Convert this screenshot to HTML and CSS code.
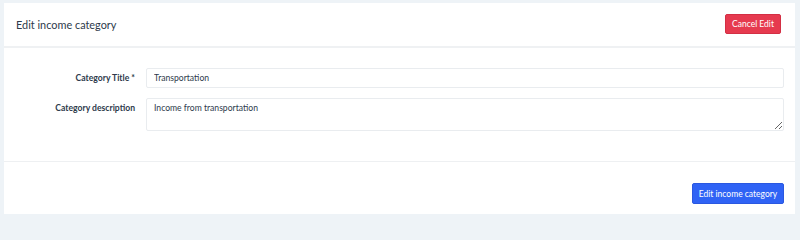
FILE: index.html
```html
<!DOCTYPE html>
<html>
<head>
<meta charset="utf-8">
<link rel="stylesheet" href="styles.css">
</head>
<body>
<div class="card">
  <div class="card-header">
    <h1 class="title">Edit income category</h1>
    <button class="btn btn-danger">Cancel Edit</button>
  </div>
  <div class="card-body">
    <div class="row">
      <label class="label">Category Title *</label>
      <input class="input" type="text" value="Transportation">
    </div>
    <div class="row">
      <label class="label">Category description</label>
      <textarea class="input textarea">Income from transportation</textarea>
    </div>
  </div>
  <div class="card-footer">
    <button class="btn btn-primary">Edit income category</button>
  </div>
</div>
</body>
</html>
```
FILE: styles.css
```css
html, body {
  margin: 0;
  padding: 0;
}
html {
  background: #eef3f7;
}
body {
  background: #eef3f7;
  font-family: "Lato", "Noto Sans", sans-serif;
  color: #2d3a4b;
  padding: 3px 5px 4px 4px;
  height: 218px;
  box-sizing: border-box;
}
.card {
  background: #fff;
  height: 211px;
  display: flex;
  flex-direction: column;
}
.card-header {
  height: 43px;
  border-bottom: 2px solid #eff1f3;
  display: flex;
  align-items: center;
  justify-content: space-between;
  padding: 0 14px 0 12px;
}
.title {
  margin: 0;
  font-size: 10.9px;
  font-weight: 400;
  color: #2d3a4b;
}
.btn {
  border: none;
  color: #fff;
  font-family: inherit;
  font-size: 8.5px;
  border-radius: 2px;
  padding: 0;
  height: 20px;
  white-space: nowrap;
  cursor: pointer;
}
.btn-danger {
  background: #e63a4f;
  border: 1px solid #d32f44;
  height: 20px;
  width: 56px;
  margin-top: -1px;
}
.btn-primary {
  background: #2f63f5;
  border: 1px solid #2a58e0;
  height: 21px;
  width: 92px;
}
.card-body {
  padding: 20px 11px 0 0;
  height: 93px;
  border-bottom: 1px solid #eef0f2;
  display: flex;
  flex-direction: column;
  gap: 10px;
}
.row {
  display: flex;
  align-items: flex-start;
}
.label {
  width: 131px;
  text-align: right;
  font-size: 8.6px;
  font-weight: 700;
  color: #2d3a4b;
  padding-right: 11px;
  padding-top: 5px;
}
.input {
  flex: 1;
  box-sizing: border-box;
  height: 20px;
  border: 1px solid #e9ecef;
  border-radius: 2px;
  font-family: inherit;
  font-size: 8.6px;
  color: #2d3a4b;
  padding: 0 7px;
  outline: none;
  margin: 0;
}
.textarea {
  height: 33px;
  padding: 4px 7px;
  resize: vertical;
}
.card-footer {
  flex: 1;
  display: flex;
  justify-content: flex-end;
  align-items: flex-end;
  padding: 0 11px 10px 0;
}
```
